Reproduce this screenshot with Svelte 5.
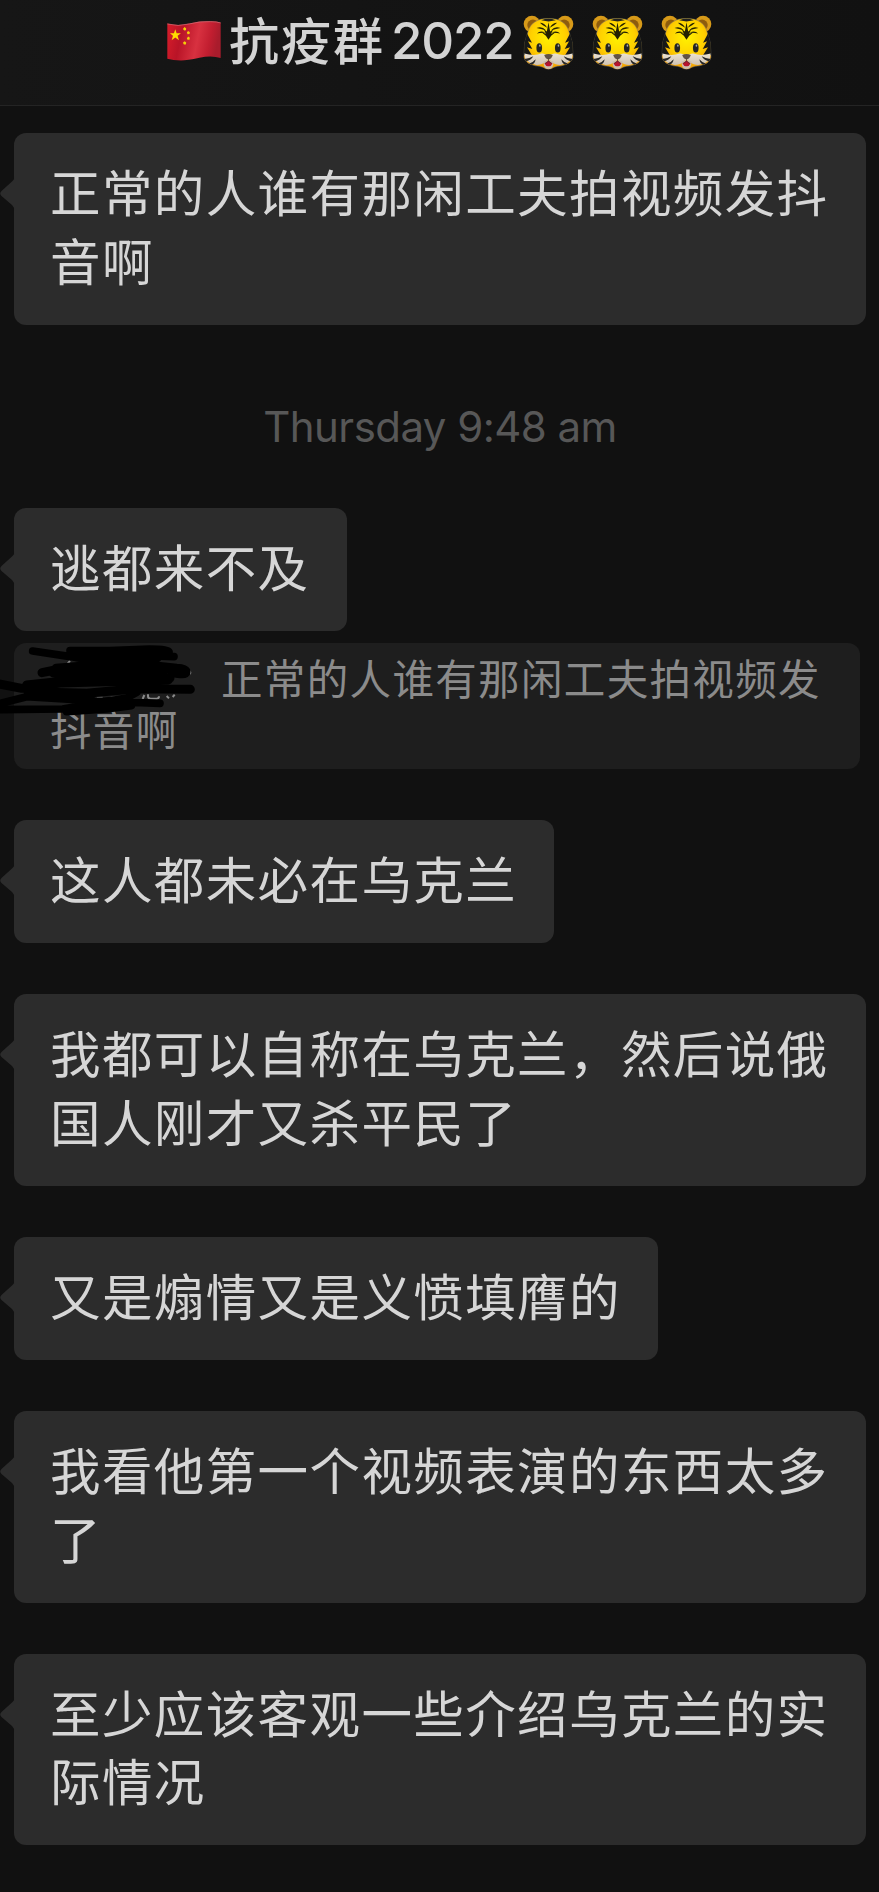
<script>
  const before = ['正常的人谁有那闲工夫拍视频发抖音啊'];
  const after = [
    '这人都未必在乌克兰',
    '我都可以自称在乌克兰，然后说俄国人刚才又杀平民了',
    '又是煽情又是义愤填膺的',
    '我看他第一个视频表演的东西太多了',
    '至少应该客观一些介绍乌克兰的实际情况'
  ];
</script>

{#snippet bubble(text)}
  <div class="bubble">
    <svg class="tail" viewBox="0 0 15 36" aria-hidden="true"><path d="M15 0V36Q15 32 12 29L1.5 20Q-1 17.5 1.5 15L12 5.500Q15 3 15 0Z" /></svg>
    <p>{text}</p>
  </div>
{/snippet}

{#snippet tiger()}
  <svg class="tiger" viewBox="0 0 154 163" aria-hidden="true">
    <circle cx="27" cy="26" r="25" fill="#d79a19" /><circle cx="127" cy="26" r="25" fill="#d79a19" />
    <circle cx="30" cy="29" r="17" fill="#8e5c0c" /><circle cx="124" cy="29" r="17" fill="#8e5c0c" />
    <path d="M77 9C45 8 22 22 15 49L5 83L3 126Q6 145 38 152Q52 153 60 156Q77 168 94 156Q102 153 116 152Q148 145 151 126L149 83L139 49C132 22 109 8 77 9Z" fill="url(#fur)" stroke="#77736b" stroke-width="1.500" />
    <path d="M12 54L27 82L15 78L28 101L12 96L27 120L3 119L4 84ZM142 54L127 82L139 78L126 101L142 96L127 120L151 119L150 84Z" fill="#171817" />
    <path d="M4 115Q34 124 56 115Q66 113 77 124Q88 113 98 115Q120 124 150 115Q151 143 116 149Q98 150 89 141L77 132L65 141Q56 150 38 149Q3 143 4 115Z" fill="url(#muzzle)" />
    <path d="M62 139L77 134L92 139Q92 163 77 161Q62 163 62 139Z" fill="#cdbfae" />
    <path d="M65 145L77 136L89 145Q85 154 77 153Q69 154 65 145Z" fill="#b7142d" />
    <path d="M64 119Q77 114 90 119Q86 131 77 133Q68 131 64 119Z" fill="#625346" />
    <path d="M77 130V138L67 145M77 138L87 145" fill="none" stroke="#473733" stroke-width="2" />
    <ellipse cx="49" cy="98" rx="8.500" ry="14" fill="#252522" /><ellipse cx="105" cy="98" rx="8.500" ry="14" fill="#252522" />
    <ellipse cx="51" cy="91" rx="2.500" ry="3.500" fill="#aaa" /><ellipse cx="107" cy="91" rx="2.500" ry="3.500" fill="#aaa" />
    <path d="M55 14Q77 6 99 14L77 18Z" fill="#222" />
    <g fill="#242100">
      <path d="M77 20L82 48L91 42L85 55L99 50L85 61L77 73L69 61L55 50L69 55L63 42L72 48Z" />
      <path d="M73 37Q65 22 51 22Q59 31 73 37ZM81 37Q89 22 103 22Q95 31 81 37Z" />
      <path d="M70 45Q56 30 41 38Q53 40 70 45ZM84 45Q98 30 113 38Q101 40 84 45Z" />
      <path d="M67 52Q53 43 42 54Q54 51 67 52ZM87 52Q101 43 112 54Q100 51 87 52Z" />
    </g>
    <path d="M5 131Q20 130 31 123Q25 134 9 139ZM19 145Q31 141 38 132Q37 143 27 149ZM149 131Q134 130 123 123Q129 134 145 139ZM135 145Q123 141 116 132Q117 143 127 149Z" fill="#252525" />
  </svg>
{/snippet}

<main>
  <header>
    <svg class="flag" viewBox="0 0 163 119" role="img" aria-label="China">
      <defs>
        <linearGradient id="cloth" x1="0" x2="1" y1="0" y2=".15">
          <stop stop-color="#d91d2a" /><stop offset=".3" stop-color="#b91427" /><stop offset=".62" stop-color="#d83140" /><stop offset=".85" stop-color="#c21e30" /><stop offset="1" stop-color="#a91c2c" />
        </linearGradient>
        <radialGradient id="fur" cx=".5" cy=".38" r=".6">
          <stop stop-color="#fff100" /><stop offset=".6" stop-color="#ffd000" /><stop offset="1" stop-color="#f29f00" />
        </radialGradient>
        <linearGradient id="muzzle" x1="0" x2="0" y1="0" y2="1">
          <stop stop-color="#ebe1d0" /><stop offset="1" stop-color="#cfc3b3" />
        </linearGradient>
      </defs>
      <path d="M1 7Q33 16 67 7T132 0Q150 0 162 4V111Q135 102 98 110T42 118Q18 118 1 113Z" fill="url(#cloth)" />
      <path d="M1 8Q33 17 67 8T132 1Q150 1 162 5" fill="none" stroke="#d6757c" stroke-width="2" />
      <path d="M25 24L29 36L42 36L32 44L36 57L25 49L14 57L18 44L9 36L21 36Z" fill="#ffdc00" />
      <g fill="#f5cf08"><path d="M53 17l5 5-1 5-5 1-4-5z" /><path d="M64 29l5 4-1 5-6 1-2-6z" /><path d="M64 46l5 4-1 6-6 0-2-5z" /><path d="M53 60l5 4-1 6-6 0-3-5z" /></g>
    </svg>
    <h1><span class="han">抗疫群</span><span class="year">2022</span></h1>
    <div class="tigers" role="img" aria-label="Tigers">{@render tiger()}{@render tiger()}{@render tiger()}</div>
  </header>

  <section class="chat">
    {#each before as text}{@render bubble(text)}{/each}
    <time>Thursday 9:48 am</time>
    <div class="thread">
      {@render bubble('逃都来不及')}
      <blockquote>
        <p>正常的人谁有那闲工夫拍视频发抖音啊</p>
        <svg class="scribble" viewBox="0 0 600 240" aria-hidden="true">
          <g fill="none" stroke="#8b8b8b" stroke-width="6"><path d="M203 62l7-8M428 168l5-12M444 154v6q0 7 8 7h18q7 0 7-7M491 108l16-3M500 159l7 7M518 162l6-7M568 84q5 4 1 9M218 164h8M284 164h24M332 164h36" /></g>
          <g fill="none" stroke="#000" stroke-width="23" stroke-linecap="round" stroke-linejoin="round">
            <path d="M98 24L206 40L326 61M210 23H330L448 18Q510 18 507 29M338 29L450 19M338 61L430 38L522 41" />
            <path d="M126 89L180 78L500 73M168 76L300 65H430L530 76Q560 78 558 88Q556 97 515 88" stroke-width="27" />
            <path d="M-12 121L65 136L180 120L505 111M80 126L280 105H510M84 146L260 151L410 137L571 139M160 90L490 105" stroke-width="27" />
            <path d="M-10 184L80 161L290 174L480 181M-10 200L188 198L380 165L410 148M200 206L320 198L394 188" />
            <path d="M210 79L460 69L490 80L180 108" stroke-width="34" />
            <path d="M230 40L470 44" stroke-width="30" />
          </g>
        </svg>
      </blockquote>
    </div>
    {#each after as text}{@render bubble(text)}{/each}
  </section>
</main>

<style>
  :global(body) { margin: 0; background: #111; }
  * { box-sizing: border-box; }
  main { width: 879px; height: 1892px; overflow: hidden; background: #111; color: #d6d6d6; font-family: "Noto Sans CJK SC", sans-serif; }
  header { height: 106px; padding: 15px 0 0 167px; border-bottom: 1px solid #242424; background: linear-gradient(90deg, #161616, #111); display: flex; align-items: flex-start; }
  .flag { width: 54px; height: 40px; margin-top: 6px; flex: none; }
  h1 { width: 302px; height: 54px; margin: 0; padding-left: 8px; display: flex; font-size: 50px; line-height: 46px; font-weight: 500; white-space: nowrap; flex: none; color: #d3d3d3; }
  .han { width: 162px; letter-spacing: 2px; }
  .year { font-family: Inter, sans-serif; font-size: 51px; line-height: 52px; letter-spacing: -1.200px; }
  .tigers { display: flex; gap: 18px; }
  .tiger { width: 51px; height: 55px; flex: none; }
  .chat { padding: 27px 13px 0 14px; display: flex; flex-direction: column; align-items: flex-start; gap: 51.100px; }
  .bubble { position: relative; max-width: 852px; padding: 23px 37px 31.300px 36px; border-radius: 12px; background: #2c2c2c; }
  p { margin: 0; }
  .bubble p { font-size: 50.500px; line-height: 68.700px; letter-spacing: 1.400px; word-break: break-all; }
  .tail { position: absolute; left: -14px; top: 43px; width: 15px; height: 36px; fill: #2c2c2c; }
  time { align-self: center; height: 81px; padding-top: 27px; font: 400 42px/48px Inter, sans-serif; letter-spacing: -.550px; color: #575757; white-space: nowrap; }
  .thread { display: flex; flex-direction: column; align-items: flex-start; gap: 12px; }
  blockquote { position: relative; width: 846px; height: 126px; margin: 0; padding: 9px 30px 0 36px; border-radius: 12px; background: #1e1e1e; color: #8b8b8b; }
  blockquote p { font-size: 41.500px; line-height: 51px; letter-spacing: 1.350px; text-indent: 171px; word-break: break-all; }
  .scribble { position: absolute; left: -14px; top: 0; width: 200px; height: 80px; }
</style>
